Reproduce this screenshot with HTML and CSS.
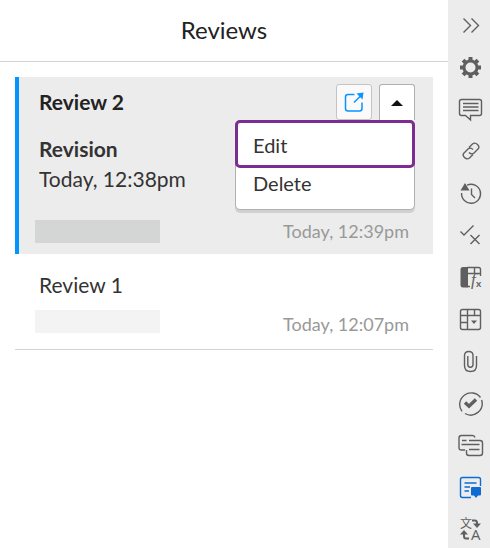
FILE: index.html
```html
<!DOCTYPE html>
<html lang="en">
<head>
<meta charset="utf-8">
<meta name="viewport" content="width=device-width, initial-scale=1">
<title>Reviews</title>
<link rel="stylesheet" href="styles.css">
</head>
<body>
<div class="app">
  <main class="panel">
    <header class="panel-header"><h1>Reviews</h1></header>
    <div class="reviews">
      <article class="review review-active">
        <div class="review-top">
          <h2>Review 2</h2>
          <div class="actions">
            <button class="action" type="button" aria-label="Open review">
              <svg width="22" height="22" viewBox="0 0 22 22" fill="none" stroke="#0a94ff" stroke-width="1.5">
                <path d="M11.500 3.500H5Q2.500 3.500 2.500 6V17.500Q2.500 20 5 20H16.500Q19 20 19 17.500V11.500M11 11.500L17.500 5"/>
                <path d="M13.500 2.500L20.500 1.500 19.500 8.500Z" fill="#0a94ff" stroke="none"/>
              </svg>
            </button>
            <div class="dropdown">
              <button class="action action-open" type="button" aria-label="More actions" aria-expanded="true">
                <svg width="12" height="6" viewBox="0 0 12 6"><path d="M6 0L12 6H0Z" fill="#111"/></svg>
              </button>
              <div class="menu">
                <button class="menu-item menu-item-focus" type="button">Edit</button>
                <button class="menu-item" type="button">Delete</button>
              </div>
            </div>
          </div>
        </div>
        <div class="revision">
          <h3>Revision</h3>
          <p>Today, 12:38pm</p>
        </div>
        <div class="review-meta"><span class="author"></span><time>Today, 12:39pm</time></div>
      </article>
      <article class="review">
        <h2>Review 1</h2>
        <div class="review-meta"><span class="author"></span><time>Today, 12:07pm</time></div>
      </article>
    </div>
  </main>
  <nav class="rail" aria-label="Tools">
    <button type="button" aria-label="Collapse"><svg viewBox="0 0 28 28"><path d="M7.500 7.500l7 7-7 7M15.500 7.500l7 7-7 7"/></svg></button>
    <button type="button" aria-label="Settings"><svg viewBox="0 0 28 28"><circle cx="14.500" cy="14.500" r="6.500" stroke-width="3"/><path stroke-width="4" d="M14.500 4v4M14.500 21v4M4 14.500h4M21 14.500h4M7.100 7.100l2.500 2.500M19.400 19.400l2.500 2.500M7.100 21.900l2.500-2.500M19.400 9.600l2.500-2.500"/></svg></button>
    <button type="button" aria-label="Comments"><svg viewBox="0 0 28 28"><path d="M5.500 4.500H23.500Q25.500 4.500 25.500 6.500V18.500Q25.500 20.500 23.500 20.500H14.500V25L9.500 20.500H5.500Q3.500 20.500 3.500 18.500V6.500Q3.500 4.500 5.500 4.500ZM7 8.500H22.500M7 12H22.500M7 15.500H22.500"/></svg></button>
    <button type="button" aria-label="Links"><svg viewBox="0 0 28 28"><path d="M13 10.500L16.500 7Q19 5 21.500 7.500T22 12L18 16Q15.500 18 13 15.500M17 17.500L13.500 21Q11 23 8.500 20.500T8 16L12 12Q14.500 10 17 12.500"/></svg></button>
    <button type="button" aria-label="History"><svg viewBox="0 0 28 28"><path d="M11 6.200A9.500 9.500 0 1 1 5.600 14M15.500 9.500V15.500L19 19"/><path class="solid" d="M9 4L13.500 11.500H4.500Z"/></svg></button>
    <button type="button" aria-label="Accept or reject"><svg viewBox="0 0 28 28"><path d="M4.500 10.500L8 14 17.500 4.500M14.500 14L23.500 23M23.500 14L14.500 23"/></svg></button>
    <button type="button" aria-label="Variables"><svg viewBox="0 0 28 28"><path d="M11 4.500H22.500Q24.500 4.500 24.500 6.500V13M11.500 10.500H24.500M18.500 4.500V10.500M11 23.500H14"/><path class="solid" d="M7 4H12V24.500H7Q4.500 24.500 4.500 22V6.500Q4.500 4 7 4Z"/><text class="fx" x="15" y="22">f</text><text class="sub" x="20" y="24">x</text></svg></button>
    <button type="button" aria-label="Table"><svg viewBox="0 0 28 28"><rect x="4.500" y="4.500" width="20" height="20" rx="2"/><path d="M11.500 4.500V24.500M4.500 10.500H24.500M18.500 4.500V10.500M4.500 17.500H11.500"/><path class="solid" d="M15 15.500H21L18 19Z"/></svg></button>
    <button type="button" aria-label="Attachments"><svg viewBox="0 0 28 28"><path d="M11.800 9V17.500Q11.800 20.200 14.400 20.200T17 17.500V8.500Q17 4.500 12.800 4.500T8.500 8.500V18.500Q8.500 24.500 14.500 24.500T20.500 18.500V9"/></svg></button>
    <button type="button" aria-label="Tasks"><svg viewBox="0 0 28 28"><path d="M24.500 8.500A11.500 11.500 0 1 0 6 22.400M9 24.500A11.500 11.500 0 0 0 25.600 11"/><path stroke-width="3.500" d="M9 13.500L13 17.200 20 10.500"/></svg></button>
    <button type="button" aria-label="Conversations"><svg viewBox="0 0 28 28"><path d="M9 19H5.500Q3 19 3 16.500V7Q3 4.500 5.500 4.500H16.500Q18.500 4.500 19 6.500M6 9.500H10.500M13 9.500H24Q26.500 9.500 26.500 12V22Q26.500 24.500 24 24.500H13Q10.500 24.500 10.500 22V19M5.500 13.500H23.500M13 18.500H23.500"/></svg></button>
    <button class="current" type="button" aria-label="Reviews"><svg viewBox="0 0 28 28"><path d="M15 24.500H6.500Q4.500 24.500 4.500 22.500V6.500Q4.500 4.500 6.500 4.500H22.500Q24.500 4.500 24.500 6.500V13M8.500 10H20.500M8.500 14H14M8.500 18H13"/><path class="solid" d="M16 14H24Q25 14 25 15V21.500Q25 22.500 24 22.500H22L20 25 18 22.500H16Q15 22.500 15 21.500V15Q15 14 16 14Z"/></svg></button>
    <button type="button" aria-label="Translate"><svg viewBox="0 0 28 28"><text class="cjk" x="4" y="13">文</text><text class="latin" x="15" y="25">A</text><path stroke-width="2" d="M16 5.500H19Q21 5.500 21 8V9M13 23.500H10Q8 23.500 8 21V19"/><path class="solid" d="M17 8.500H25L21 13ZM4 19.500H12L8 15Z"/></svg></button>
  </nav>
</div>
</body>
</html>
```
FILE: styles.css
```css
* { box-sizing: border-box; }

body {
  margin: 0;
  background: #fff;
  color: #333;
  font-family: Lato, "Liberation Sans", sans-serif;
  font-size: 21px;
  line-height: 30px;
}

h1, h2, h3, p { margin: 0; font-size: inherit; font-weight: 400; }

button { padding: 0; border: 0; background: none; color: inherit; font: inherit; }

.app { display: flex; height: 100vh; overflow: hidden; }

.panel { flex: 1; min-width: 0; }

.panel-header {
  padding: 15px 0 16px;
  border-bottom: 1px solid #d3d3d3;
  color: #222;
  font-size: 24px;
  text-align: center;
}

.reviews { margin: 15px; }

.review {
  padding: 16px 20px 16px 24px;
  border-bottom: 1px solid #d3d3d3;
}

.review-active {
  padding: 7px 18px 11px 20px;
  border-bottom: 0;
  border-left: 4px solid #0095ff;
  background: #ececec;
}

.review-top { display: flex; justify-content: space-between; align-items: center; }

.review-active h2, .revision h3 { font-weight: 700; }
.review-active h2 { color: #222; }

.actions { display: flex; gap: 7px; }

.action {
  display: flex;
  align-items: center;
  justify-content: center;
  width: 36px;
  height: 36px;
  border: 1px solid #c4c4c4;
  border-radius: 3px;
  background: #fafafa;
}

.action-open { border-color: #b0b0b0; border-bottom: 0; border-radius: 3px 3px 0 0; background: #fff; }

.dropdown { position: relative; }

.menu {
  position: absolute;
  top: 100%;
  right: 0;
  width: 180px;
  border: 1px solid #b0b0b0;
  border-radius: 5px;
  background: #fff;
  box-shadow: 0 3px 0 #d0d0d0;
}

.menu-item {
  display: block;
  width: 100%;
  padding: 1px 17px 11px;
  font-size: 20px;
  text-align: left;
}

.menu-item-focus {
  width: calc(100% + 2px);
  margin: -1px;
  padding: 7px 15px 5px;
  border: 3px solid #7b2d91;
  border-radius: 5px;
}

.revision { padding: 14px 0 25px; }

.review-meta {
  display: flex;
  justify-content: space-between;
  align-items: center;
  margin-left: -4px;
  padding-right: 6px;
  color: #999;
  font-size: 18px;
  line-height: 24px;
}

.review:not(.review-active) .review-meta { align-items: flex-start; padding: 10px 4px 0 0; }
.review:not(.review-active) time { padding-top: 2px; }
.review:not(.review-active) { padding-bottom: 13px; }

.author { width: 125px; height: 23px; background: #f3f3f3; }
.review-active .author { background: #d4d6d5; }

.rail {
  width: 42px;
  flex: none;
  padding: 4px 0 0 2px;
  background: #ececec;
  color: #5f5f5f;
}

.rail button { display: flex; align-items: center; justify-content: center; width: 100%; height: 42px; }

.rail svg { width: 28px; height: 28px; fill: none; stroke: currentColor; stroke-width: 1.4; }

.rail .solid, .rail text { fill: currentColor; stroke: none; }

.rail .current { color: #0c6cd4; }

.fx { font: italic 17px "Liberation Serif", serif; }
.sub { font: 700 10px Lato, sans-serif; }
.cjk { font: 12px "Noto Sans CJK SC", sans-serif; }
.latin { font: 15px "Open Sans", sans-serif; }
```
